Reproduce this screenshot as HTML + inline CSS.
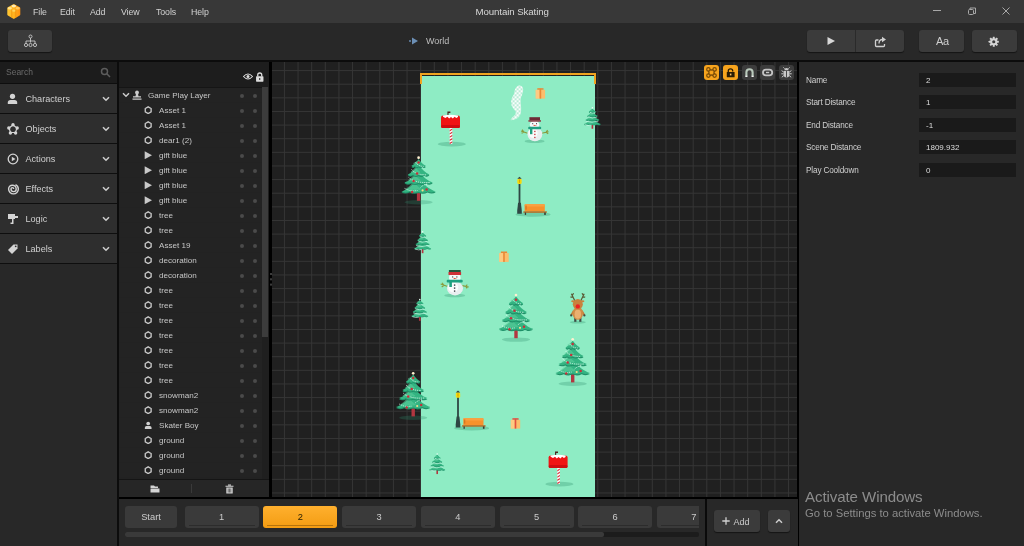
<!DOCTYPE html>
<html><head><meta charset="utf-8"><title>Mountain Skating</title>
<style>
*{box-sizing:border-box;margin:0;padding:0}
html,body{width:1024px;height:546px;overflow:hidden;background:#000;font-family:"Liberation Sans",sans-serif;color:#ccc;font-size:9px}
.abs,body>div,body>svg{position:absolute}
body>div{will-change:transform}
#title{left:0;top:0;width:1024px;height:22.500px;background:#383838}
#title span{position:absolute;top:7px;font-size:8.800px;color:#d2d2d2;letter-spacing:-0.1px}
#tool{left:0;top:23px;width:1024px;height:37px;background:#282828}
.btn{position:absolute;background:#3b3b3b;border-radius:3px;box-shadow:0 1px 1px rgba(0,0,0,.5)}
#left{left:0;top:61px;width:117px;height:485px;background:#0e0e0e}
#search{position:absolute;left:0;top:0;width:117px;height:22px;background:#1c1c1c}
#search span{position:absolute;left:6px;top:6px;font-size:8.5px;color:#6a6a6a}
.cat{position:absolute;left:0;width:117px;height:29px;background:#2e2e2e}
.cat span{position:absolute;left:25.500px;top:9.600px;font-size:9.100px;color:#d0d0d0}
.cat .chev{position:absolute;left:102px;top:12px}
.cat .ci{position:absolute;left:7.300px;top:8.800px}
#layers{left:119px;top:61px;width:150px;height:436px;background:#222;overflow:hidden}
#lhead{position:absolute;left:0;top:0;width:150px;height:25.500px;background:#1d1d1d}
.lr{position:absolute;left:0;width:143px;height:14px;background:#232323;margin-left:0}
.lr span{position:absolute;top:3px;font-size:8.100px;color:#c6c6c6;white-space:nowrap}
.lr .ic{position:absolute;left:25px;top:2.900px;width:8.400px;height:8.400px}
.lr i{position:absolute;top:6.300px;width:4px;height:4px;border-radius:2px;background:#4a4a4a}
.lr .d1{left:121px}.lr .d2{left:134px}
#canvas{left:272px;top:62px;width:525px;height:435px;background-color:#202020;
 background-image:linear-gradient(#353535 1px,transparent 1px),linear-gradient(90deg,#353535 1px,transparent 1px);
 background-size:13.64px 13.64px;background-position:-1.700px 8.100px;overflow:hidden}
#right{left:799px;top:62px;width:225px;height:484px;background:#282828}
.pl{position:absolute;left:7px;font-size:8.200px;letter-spacing:-0.150px;color:#cfcfcf}
.pf{position:absolute;left:120px;width:97px;height:14px;background:#1a1a1a;font-size:8px;color:#ddd;padding:3px 0 0 7px}
#bottom{left:119px;top:499px;width:588px;height:47px;background:#282828}
#bottom2{left:707px;top:499px;width:91px;height:47px;background:#282828}
.tb{position:absolute;top:2.800px;width:15px;height:15px;border-radius:3px;background:#3c3c3c}
.tab{position:absolute;top:7px;height:22px;background:#3a3a3a;border-radius:3px;font-size:9.300px;color:#ccc;text-align:center;padding-top:6px}
.tab.n{width:74px}
#sel:after{background:#b5730c !important}
.tab.n:after{content:"";position:absolute;left:4px;right:4px;bottom:2px;height:1px;background:#2c2c2c}
</style></head><body>
<div style="left:0;top:22px;width:1024px;height:3px;background:#282828"></div>
<div id="title">
<svg style="position:absolute;left:0;top:0" width="28" height="23" viewBox="0 0 28 23">
<defs><linearGradient id="lg" x1="0" x2="1" y1="0" y2="0"><stop offset="0" stop-color="#ffc834"/><stop offset="0.5" stop-color="#ffb21e"/><stop offset="1" stop-color="#ff8f10"/></linearGradient></defs>
<path d="M13.800 4 L19.800 7.200 Q20.300 7.500 20.300 8.200 V14.600 Q20.300 15.300 19.700 15.600 L13.800 19 L7.900 15.600 Q7.300 15.300 7.300 14.600 V8.200 Q7.300 7.500 7.800 7.200 Z" fill="url(#lg)"/>
<ellipse cx="9.800" cy="8.300" rx="2.100" ry="1.200" fill="#ffe28e"/><ellipse cx="13.800" cy="6.100" rx="2.300" ry="1.300" fill="#ffe9ae"/><ellipse cx="17.700" cy="8.300" rx="2.100" ry="1.200" fill="#ffc860"/><ellipse cx="13.800" cy="10.600" rx="2.100" ry="1.200" fill="#ffd45c"/>
<path d="M11.800 9.500 V17.600 M15.800 9.500 V17.600" stroke="#ee8c0c" stroke-width="0.700" fill="none"/>
</svg>
<span style="left:33px">File</span><span style="left:60px">Edit</span><span style="left:90px">Add</span><span style="left:121px">View</span><span style="left:156px">Tools</span><span style="left:191px">Help</span>
<span style="left:475.500px;top:6px;font-size:9.700px;color:#d8d8d8">Mountain Skating</span>
<svg style="position:absolute;left:930px;top:5px" width="90" height="14" viewBox="0 0 90 14" fill="none" stroke="#a8a8a8" stroke-width="1">
<path d="M3 5.5 H11"/><rect x="38.5" y="4.5" width="5" height="5" rx="1"/><path d="M40 4.5 V3 H45.500 V8.5 H43.5"/>
<path d="M72.500 2.500 L79.500 9.500 M79.500 2.500 L72.500 9.500"/></svg>
</div>
<div id="tool">
<div class="btn" style="left:8px;top:7px;width:44px;height:22px"><svg style="position:absolute;left:15px;top:4px" width="15" height="14" viewBox="0 0 15 14" fill="none" stroke="#c8c8c8" stroke-width="0.9"><circle cx="7.500" cy="2.500" r="1.500"/><path d="M7.500 4 V8.500 M3 9.500 V7 H12 V9.500"/><circle cx="3" cy="11" r="1.600"/><circle cx="7.500" cy="11" r="1.600"/><circle cx="12" cy="11" r="1.600"/></svg></div>
<svg style="position:absolute;left:408.200px;top:13px" width="12" height="10" viewBox="0 0 12 10"><polygon points="4,1.500 10,5 4,8.500" fill="#6c8fb5"/><rect x="1" y="4.300" width="2" height="1.400" fill="#6c8fb5"/></svg>
<span style="position:absolute;left:426px;top:13px;font-size:9px;color:#bdbdbd">World</span>
<div class="btn" style="left:807px;top:7px;width:97px;height:22px"><i style="position:absolute;left:48px;top:0;width:1px;height:22px;background:#2a2a2a"></i>
<svg style="position:absolute;left:18.800px;top:6.300px" width="10" height="10" viewBox="0 0 10 10"><polygon points="1.500,1 9,5 1.500,9" fill="#d8d8d8"/></svg>
<svg style="position:absolute;left:67px;top:5.500px" width="13" height="12" viewBox="0 0 13 12" fill="none" stroke="#d0d0d0" stroke-width="1.300"><path d="M4.500 4 H2.500 Q1.500 4 1.500 5 V9.500 Q1.500 10.500 2.500 10.500 H9.500 Q10.500 10.500 10.500 9.500 V8"/><path d="M5 7.500 Q5 3.500 8.500 3.500" /><polygon points="8,0.800 12,3.500 8,6.200" fill="#d0d0d0" stroke="none"/></svg></div>
<div class="btn" style="left:919px;top:7px;width:44.500px;height:22px"><span style="position:absolute;left:17px;top:5px;font-size:11px;color:#cfcfcf;letter-spacing:-0.400px">Aa</span></div>
<div class="btn" style="left:971.700px;top:7px;width:45px;height:22px"><svg style="position:absolute;left:16.700px;top:5.500px" width="11.500" height="11.500" viewBox="0 0 14 14"><g fill="#d4d4d4"><circle cx="7" cy="7" r="4.300"/><g id="t"><rect x="5.800" y="0.800" width="2.400" height="12.400" rx="0.500"/></g><rect x="5.800" y="0.800" width="2.400" height="12.400" rx="0.500" transform="rotate(45 7 7)"/><rect x="5.800" y="0.800" width="2.400" height="12.400" rx="0.500" transform="rotate(90 7 7)"/><rect x="5.800" y="0.800" width="2.400" height="12.400" rx="0.500" transform="rotate(135 7 7)"/></g><circle cx="7" cy="7" r="1.900" fill="#3b3b3b"/></svg></div>
</div>
<div id="left">
<div id="search"><span>Search</span><svg style="position:absolute;left:100px;top:6px" width="11" height="11" viewBox="0 0 11 11" fill="none" stroke="#5c5c5c" stroke-width="1.500"><circle cx="4.500" cy="4.500" r="3"/><path d="M6.800 6.800 L10 10"/></svg></div>
<div class="cat" style="top:23px"><svg class="ci" width="11" height="12" viewBox="0 0 11 12"><circle cx="5.500" cy="3.300" r="2.600" fill="#d4d4d4"/><path d="M0.800 11 V9.500 Q0.800 7 3.500 7 H7.500 Q10.200 7 10.200 9.500 V11 Z" fill="#d4d4d4"/></svg><span>Characters</span><svg class="chev" width="8" height="6" viewBox="0 0 8 6"><path d="M1 1.200 L4 4.200 L7 1.200" fill="none" stroke="#ccc" stroke-width="1.600"/></svg></div>
<div class="cat" style="top:53px"><svg class="ci" width="12" height="12" viewBox="0 0 12 12" fill="none" stroke="#d4d4d4"><polygon points="6,2 10,5 8.500,9.500 3.500,9.500 2,5" stroke-width="1.200"/><g fill="#d4d4d4" stroke="none"><circle cx="6" cy="1.800" r="1.700"/><circle cx="10.200" cy="5" r="1.700"/><circle cx="8.600" cy="10" r="1.700"/><circle cx="3.400" cy="10" r="1.700"/><circle cx="1.800" cy="5" r="1.700"/></g></svg><span>Objects</span><svg class="chev" width="8" height="6" viewBox="0 0 8 6"><path d="M1 1.200 L4 4.200 L7 1.200" fill="none" stroke="#ccc" stroke-width="1.600"/></svg></div>
<div class="cat" style="top:83px"><svg class="ci" width="12" height="12" viewBox="0 0 12 12"><circle cx="6" cy="6" r="4.800" fill="none" stroke="#d4d4d4" stroke-width="1.300"/><polygon points="4.800,3.800 8.500,6 4.800,8.200" fill="#d4d4d4"/></svg><span>Actions</span><svg class="chev" width="8" height="6" viewBox="0 0 8 6"><path d="M1 1.200 L4 4.200 L7 1.200" fill="none" stroke="#ccc" stroke-width="1.600"/></svg></div>
<div class="cat" style="top:113px"><svg class="ci" style="left:6.300px;top:8px" width="13.600" height="13.600" viewBox="0 0 12 12" fill="none" stroke="#d4d4d4" stroke-width="1.250"><path d="M6.800 6.200 A1.200 1.200 0 0 0 4.400 6.200 A2.300 2.300 0 0 0 9 6.200 A3.350 3.350 0 0 0 2.300 6.200 A4.300 4.300 0 0 0 10.900 6.200 A4.400 4.400 0 0 0 8.400 2.300"/></svg><span>Effects</span><svg class="chev" width="8" height="6" viewBox="0 0 8 6"><path d="M1 1.200 L4 4.200 L7 1.200" fill="none" stroke="#ccc" stroke-width="1.600"/></svg></div>
<div class="cat" style="top:143px"><svg class="ci" width="12" height="12" viewBox="0 0 12 12"><path d="M1 1 H8 V3 H11 V5 H8 V6 H6.500 V11 H3.500 V9.500 H5 V6 H1 Z" fill="#d4d4d4"/></svg><span>Logic</span><svg class="chev" width="8" height="6" viewBox="0 0 8 6"><path d="M1 1.200 L4 4.200 L7 1.200" fill="none" stroke="#ccc" stroke-width="1.600"/></svg></div>
<div class="cat" style="top:173px"><svg class="ci" width="12" height="12" viewBox="0 0 12 12"><path d="M6.500 1.500 H10.500 V5.500 L5 11 L1 7 Z" fill="#d4d4d4"/><circle cx="8.700" cy="3.300" r="0.900" fill="#2e2e2e"/></svg><span>Labels</span><svg class="chev" width="8" height="6" viewBox="0 0 8 6"><path d="M1 1.200 L4 4.200 L7 1.200" fill="none" stroke="#ccc" stroke-width="1.600"/></svg></div>

<div style="position:absolute;left:0;top:203px;width:117px;height:282px;background:#282828"></div>
</div>
<div id="layers">
<div id="lhead">
<svg style="position:absolute;left:124px;top:12px" width="10" height="7" viewBox="0 0 10 7"><path d="M0.500 3.500 Q5 -1.500 9.500 3.500 Q5 8.500 0.500 3.500 Z" fill="none" stroke="#ddd" stroke-width="1.100"/><circle cx="5" cy="3.500" r="1.500" fill="#ddd"/></svg>
<svg style="position:absolute;left:136.400px;top:11.200px" width="9.500" height="10" viewBox="0 0 9 10"><path d="M2.500 4.500 V3 Q2.500 1 4.500 1 Q6.500 1 6.500 3 V4.500" fill="none" stroke="#ddd" stroke-width="1.300"/><rect x="0.800" y="4.300" width="7.400" height="5.400" rx="0.600" fill="#ddd"/><rect x="4" y="6" width="1" height="2" fill="#222"/></svg>
</div>
<div style="position:absolute;left:0;top:25.500px;width:150px;height:1px;background:#151515"></div>
<div style="position:absolute;left:0;top:-61px;width:150px;height:600px">
<div class="lr" style="top:87.7px"><svg style="position:absolute;left:2.500px;top:4.800px" width="8" height="6" viewBox="0 0 8 6"><path d="M1 1.2 L4 4.2 L7 1.2" fill="none" stroke="#ccc" stroke-width="1.5"/></svg><svg style="position:absolute;left:13.300px;top:2px" width="10" height="10" viewBox="0 0 10 10"><circle cx="5" cy="2.4" r="1.9" fill="#ccc"/><path d="M4 3.5 H6 L6.5 6.5 H3.5 Z M1 6.3 H9 V7.6 H1 Z M0.5 8.6 H9.5 V9.8 H0.5 Z" fill="#ccc"/></svg><span style="left:29px">Game Play Layer</span><i class="d1"></i><i class="d2"></i></div>
<div class="lr" style="top:102.7px"><svg class="ic" viewBox="0 0 10 10"><polygon points="5,1 8.5,3 8.5,7 5,9 1.5,7 1.5,3" fill="none" stroke="#c8c8c8" stroke-width="1.6"/></svg><span style="left:40px">Asset 1</span><i class="d1"></i><i class="d2"></i></div>
<div class="lr" style="top:117.7px"><svg class="ic" viewBox="0 0 10 10"><polygon points="5,1 8.5,3 8.5,7 5,9 1.5,7 1.5,3" fill="none" stroke="#c8c8c8" stroke-width="1.6"/></svg><span style="left:40px">Asset 1</span><i class="d1"></i><i class="d2"></i></div>
<div class="lr" style="top:132.7px"><svg class="ic" viewBox="0 0 10 10"><polygon points="5,1 8.5,3 8.5,7 5,9 1.5,7 1.5,3" fill="none" stroke="#c8c8c8" stroke-width="1.6"/></svg><span style="left:40px">dear1 (2)</span><i class="d1"></i><i class="d2"></i></div>
<div class="lr" style="top:147.7px"><svg class="ic" viewBox="0 0 10 10"><polygon points="0.800,0.200 9.600,5 0.800,9.800" fill="#c8c8c8"/></svg><span style="left:40px">gift blue</span><i class="d1"></i><i class="d2"></i></div>
<div class="lr" style="top:162.7px"><svg class="ic" viewBox="0 0 10 10"><polygon points="0.800,0.200 9.600,5 0.800,9.800" fill="#c8c8c8"/></svg><span style="left:40px">gift blue</span><i class="d1"></i><i class="d2"></i></div>
<div class="lr" style="top:177.7px"><svg class="ic" viewBox="0 0 10 10"><polygon points="0.800,0.200 9.600,5 0.800,9.800" fill="#c8c8c8"/></svg><span style="left:40px">gift blue</span><i class="d1"></i><i class="d2"></i></div>
<div class="lr" style="top:192.7px"><svg class="ic" viewBox="0 0 10 10"><polygon points="0.800,0.200 9.600,5 0.800,9.800" fill="#c8c8c8"/></svg><span style="left:40px">gift blue</span><i class="d1"></i><i class="d2"></i></div>
<div class="lr" style="top:207.7px"><svg class="ic" viewBox="0 0 10 10"><polygon points="5,1 8.5,3 8.5,7 5,9 1.5,7 1.5,3" fill="none" stroke="#c8c8c8" stroke-width="1.6"/></svg><span style="left:40px">tree</span><i class="d1"></i><i class="d2"></i></div>
<div class="lr" style="top:222.7px"><svg class="ic" viewBox="0 0 10 10"><polygon points="5,1 8.5,3 8.5,7 5,9 1.5,7 1.5,3" fill="none" stroke="#c8c8c8" stroke-width="1.6"/></svg><span style="left:40px">tree</span><i class="d1"></i><i class="d2"></i></div>
<div class="lr" style="top:237.7px"><svg class="ic" viewBox="0 0 10 10"><polygon points="5,1 8.5,3 8.5,7 5,9 1.5,7 1.5,3" fill="none" stroke="#c8c8c8" stroke-width="1.6"/></svg><span style="left:40px">Asset 19</span><i class="d1"></i><i class="d2"></i></div>
<div class="lr" style="top:252.7px"><svg class="ic" viewBox="0 0 10 10"><polygon points="5,1 8.5,3 8.5,7 5,9 1.5,7 1.5,3" fill="none" stroke="#c8c8c8" stroke-width="1.6"/></svg><span style="left:40px">decoration</span><i class="d1"></i><i class="d2"></i></div>
<div class="lr" style="top:267.7px"><svg class="ic" viewBox="0 0 10 10"><polygon points="5,1 8.5,3 8.5,7 5,9 1.5,7 1.5,3" fill="none" stroke="#c8c8c8" stroke-width="1.6"/></svg><span style="left:40px">decoration</span><i class="d1"></i><i class="d2"></i></div>
<div class="lr" style="top:282.7px"><svg class="ic" viewBox="0 0 10 10"><polygon points="5,1 8.5,3 8.5,7 5,9 1.5,7 1.5,3" fill="none" stroke="#c8c8c8" stroke-width="1.6"/></svg><span style="left:40px">tree</span><i class="d1"></i><i class="d2"></i></div>
<div class="lr" style="top:297.7px"><svg class="ic" viewBox="0 0 10 10"><polygon points="5,1 8.5,3 8.5,7 5,9 1.5,7 1.5,3" fill="none" stroke="#c8c8c8" stroke-width="1.6"/></svg><span style="left:40px">tree</span><i class="d1"></i><i class="d2"></i></div>
<div class="lr" style="top:312.7px"><svg class="ic" viewBox="0 0 10 10"><polygon points="5,1 8.5,3 8.5,7 5,9 1.5,7 1.5,3" fill="none" stroke="#c8c8c8" stroke-width="1.6"/></svg><span style="left:40px">tree</span><i class="d1"></i><i class="d2"></i></div>
<div class="lr" style="top:327.7px"><svg class="ic" viewBox="0 0 10 10"><polygon points="5,1 8.5,3 8.5,7 5,9 1.5,7 1.5,3" fill="none" stroke="#c8c8c8" stroke-width="1.6"/></svg><span style="left:40px">tree</span><i class="d1"></i><i class="d2"></i></div>
<div class="lr" style="top:342.7px"><svg class="ic" viewBox="0 0 10 10"><polygon points="5,1 8.5,3 8.5,7 5,9 1.5,7 1.5,3" fill="none" stroke="#c8c8c8" stroke-width="1.6"/></svg><span style="left:40px">tree</span><i class="d1"></i><i class="d2"></i></div>
<div class="lr" style="top:357.7px"><svg class="ic" viewBox="0 0 10 10"><polygon points="5,1 8.5,3 8.5,7 5,9 1.5,7 1.5,3" fill="none" stroke="#c8c8c8" stroke-width="1.6"/></svg><span style="left:40px">tree</span><i class="d1"></i><i class="d2"></i></div>
<div class="lr" style="top:372.7px"><svg class="ic" viewBox="0 0 10 10"><polygon points="5,1 8.5,3 8.5,7 5,9 1.5,7 1.5,3" fill="none" stroke="#c8c8c8" stroke-width="1.6"/></svg><span style="left:40px">tree</span><i class="d1"></i><i class="d2"></i></div>
<div class="lr" style="top:387.7px"><svg class="ic" viewBox="0 0 10 10"><polygon points="5,1 8.5,3 8.5,7 5,9 1.5,7 1.5,3" fill="none" stroke="#c8c8c8" stroke-width="1.6"/></svg><span style="left:40px">snowman2</span><i class="d1"></i><i class="d2"></i></div>
<div class="lr" style="top:402.7px"><svg class="ic" viewBox="0 0 10 10"><polygon points="5,1 8.5,3 8.5,7 5,9 1.5,7 1.5,3" fill="none" stroke="#c8c8c8" stroke-width="1.6"/></svg><span style="left:40px">snowman2</span><i class="d1"></i><i class="d2"></i></div>
<div class="lr" style="top:417.7px"><svg class="ic" viewBox="0 0 10 10"><circle cx="5" cy="3" r="2.2" fill="#d0d0d0"/><path d="M1 9.5 V8 Q1 6 3 6 H7 Q9 6 9 8 V9.5 Z" fill="#d0d0d0"/></svg><span style="left:40px">Skater Boy</span><i class="d1"></i><i class="d2"></i></div>
<div class="lr" style="top:432.7px"><svg class="ic" viewBox="0 0 10 10"><polygon points="5,1 8.5,3 8.5,7 5,9 1.5,7 1.5,3" fill="none" stroke="#c8c8c8" stroke-width="1.6"/></svg><span style="left:40px">ground</span><i class="d1"></i><i class="d2"></i></div>
<div class="lr" style="top:447.7px"><svg class="ic" viewBox="0 0 10 10"><polygon points="5,1 8.5,3 8.5,7 5,9 1.5,7 1.5,3" fill="none" stroke="#c8c8c8" stroke-width="1.6"/></svg><span style="left:40px">ground</span><i class="d1"></i><i class="d2"></i></div>
<div class="lr" style="top:462.7px"><svg class="ic" viewBox="0 0 10 10"><polygon points="5,1 8.5,3 8.5,7 5,9 1.5,7 1.5,3" fill="none" stroke="#c8c8c8" stroke-width="1.6"/></svg><span style="left:40px">ground</span><i class="d1"></i><i class="d2"></i></div>
</div>
<div style="position:absolute;left:143px;top:26px;width:7px;height:392px;background:#1f1f1f"></div>
<div style="position:absolute;left:143px;top:26px;width:6px;height:249.500px;background:#3c3c3c"></div>
<div style="position:absolute;left:0;top:418px;width:150px;height:18px;background:#262626;border-top:1px solid #151515">
<svg style="position:absolute;left:31px;top:5px" width="10" height="8" viewBox="0 0 10 8"><path d="M0.500 0.500 H4 L5 1.500 H8 V3 H0.500 Z M0.500 3.600 H9.500 V7.500 H0.500 Z" fill="#d4d4d4"/></svg>
<i style="position:absolute;left:72px;top:4px;width:1px;height:9px;background:#3a3a3a"></i>
<svg style="position:absolute;left:106px;top:4px" width="9" height="10" viewBox="0 0 9 10"><path d="M0.500 1.800 H8.500 V2.800 H0.500 Z M3 0.500 H6 V1.500 H3 Z M1.300 3.500 H7.700 V9.500 H1.300 Z" fill="#d4d4d4"/><path d="M3.200 4.500 V8.500 M4.500 4.500 V8.500 M5.800 4.500 V8.500" stroke="#262626" stroke-width="0.600"/></svg>
</div>
</div>
<div style="left:269.600px;top:272.500px;width:1.600px;height:1.600px;background:#3c3c3c;box-shadow:0 5.300px 0 #3c3c3c,0 10.600px 0 #3c3c3c"></div>
<div id="canvas">
<div style="position:absolute;left:149px;top:13.5px;width:173.500px;height:421.500px;background:#8eecc4"></div>
<div style="position:absolute;left:148px;top:11px;width:175.500px;height:11px;border:2px solid #f0a420;border-bottom:none"></div>
<svg style="position:absolute;left:-272px;top:-62px" width="1024" height="546" viewBox="0 0 1024 546"><defs><pattern id="ck" x="0.6" y="0.3" width="4" height="4" patternUnits="userSpaceOnUse"><rect width="4" height="4" fill="#ffffff"/><rect width="2" height="2" fill="#bdebd8"/><rect x="2" y="2" width="2" height="2" fill="#bdebd8"/></pattern></defs>
<path d="M518.500,85.600 C522.500,85 524,88.500 522.800,92.500 C522,95.500 520.600,97.500 520.600,100.500 C520.600,104.500 521.600,108 521,112 C520.400,116.500 518,119.300 510.800,120.200 C510.600,118 514,116.500 515.500,114 C517,111 513.200,110 511.600,105.500 C510.400,101 511.600,97.500 513.600,95 C515,93 513.800,88 518.500,85.600 Z" fill="url(#ck)" opacity="0.95"/>
<g><rect x="535.7" y="89.8" width="9.4" height="8.8" fill="#fbbd6c"/><rect x="535.7" y="89.8" width="3.6" height="8.8" fill="#fdd08c" opacity="0.7"/><rect x="539.6" y="88.8" width="1.600" height="9.800" fill="#ea8836"/><rect x="537.3" y="88.2" width="6.200" height="1.500" fill="#ea8836"/></g>
<g><ellipse cx="451.8" cy="144.1" rx="14" ry="2.4" fill="#2a8a68" opacity="0.3"/><rect x="449.7" y="127.4" width="2.6" height="16.5" fill="#fff"/><path d="M449.7 130 L452.3 128.4 V129.8 L449.7 131.4 Z" fill="#d8323c"/><path d="M449.7 133.2 L452.3 131.6 V133 L449.7 134.6 Z" fill="#d8323c"/><path d="M449.7 136.4 L452.3 134.8 V136.2 L449.7 137.8 Z" fill="#d8323c"/><path d="M449.7 139.6 L452.3 138 V139.4 L449.7 141 Z" fill="#d8323c"/><path d="M449.7 142.8 L452.3 141.2 V142.6 L449.7 144.2 Z" fill="#d8323c"/><path d="M447.4 116.4 V111.6 H450.4 V113 H448.6 V116.4 Z" fill="#4a2a22"/><rect x="441" y="115.4" width="19" height="12.6" rx="2.2" fill="#f01414"/><rect x="441" y="125" width="19" height="3" rx="1.5" fill="#d00c10"/><path d="M443 115.6 Q450.5 113.8 458 115.6 L458 117 L456.3 118 L454.6 116.8 L452.8 118.4 L451 116.9 L449.2 118.4 L447.4 116.8 L445.4 118 L443 116.8 Z" fill="#fff"/></g>
<g><ellipse cx="534.6" cy="141.2" rx="10" ry="1.8" fill="#2a8a68" opacity="0.3"/><path d="M527.6 133.2 L521.1 131 M523.6 131.8 L522.2 129.6 M524 132 L521.6 133.2 M541.6 133.2 L548.6 131.8 M546 132.3 L547.6 130.2 M546 132.3 L548.2 133.8" stroke="#8a9a3c" stroke-width="1.1" fill="none"/><ellipse cx="534.9" cy="134.2" rx="7.4" ry="7" fill="#e9eef0"/><ellipse cx="533.1" cy="133.2" rx="4.5" ry="4.8" fill="#fafcfc"/><ellipse cx="534.6" cy="124.8" rx="4.8" ry="4" fill="#f6f9fa"/><rect x="528.2" y="126.8" width="13" height="2.4" rx="1" fill="#1fa080"/><rect x="530" y="127.2" width="2.4" height="7" fill="#1fa080"/><rect x="529.4" y="117.2" width="10.6" height="3.2" fill="#6e2b36"/><rect x="528.4" y="120.2" width="12.6" height="1.5" fill="#8c3844"/><rect x="532.2" y="123.2" width="1" height="1" fill="#333"/><rect x="536" y="123.2" width="1" height="1" fill="#333"/><path d="M533.6 124.8 L537.2 125.6 L533.6 126 Z" fill="#e0523a"/><rect x="534.2" y="130.8" width="1.3" height="1.3" fill="#c8303a"/><rect x="534.2" y="133.8" width="1.3" height="1.3" fill="#c8303a"/><rect x="534.2" y="136.8" width="1.3" height="1.3" fill="#c8303a"/></g>
<g><rect x="591.57" y="123.66" width="1.67" height="5.1" fill="#b23640"/><path d="M592.4,118.32 C589.87,121.3 586.84,123.86 583.97,124.64 Q585.83,125.72 588.02,124.74 Q590.04,125.82 592.4,124.93 Q594.76,125.82 596.78,124.74 Q598.97,125.72 600.83,124.64 C597.96,123.86 594.93,121.3 592.4,118.32 Z" fill="#1f9068"/><path d="M592.4,117.78 C589.87,120.76 586.84,123.32 583.97,124.1 Q585.83,125.18 588.02,124.2 Q590.04,125.28 592.4,124.39 Q594.76,125.28 596.78,124.2 Q598.97,125.18 600.83,124.1 C597.96,123.32 594.93,120.76 592.4,117.78 Z" fill="#34b482"/><path d="M589.87,118.76 C588.73,120.82 587.37,122.09 586.08,122.88 Q586.91,123.95 587.9,122.97 Q588.81,124.05 589.87,123.17 Q590.93,124.05 591.84,122.97 Q592.83,123.95 593.66,122.88 C592.37,122.09 591.01,120.82 589.87,118.76 Z" fill="#5fcf9f" opacity="0.55"/><path d="M592.4,114.89 C590.31,117.5 587.81,119.54 585.44,120.33 Q586.97,121.41 588.78,120.43 Q590.45,121.5 592.4,120.62 Q594.35,121.5 596.02,120.43 Q597.83,121.41 599.36,120.33 C596.99,119.54 594.49,117.5 592.4,114.89 Z" fill="#1f9068"/><path d="M592.4,114.35 C590.31,116.96 587.81,119 585.44,119.79 Q586.97,120.87 588.78,119.89 Q590.45,120.97 592.4,120.08 Q594.35,120.97 596.02,119.89 Q597.83,120.87 599.36,119.79 C596.99,119 594.49,116.96 592.4,114.35 Z" fill="#34b482"/><path d="M590.31,115.33 C589.37,117.02 588.25,117.78 587.18,118.56 Q587.87,119.64 588.68,118.66 Q589.44,119.74 590.31,118.86 Q591.19,119.74 591.94,118.66 Q592.75,119.64 593.44,118.56 C592.38,117.78 591.25,117.02 590.31,115.33 Z" fill="#5fcf9f" opacity="0.55"/><path d="M592.4,111.46 C590.81,113.87 588.91,115.62 587.11,116.41 Q588.27,117.49 589.65,116.51 Q590.92,117.58 592.4,116.7 Q593.88,117.58 595.15,116.51 Q596.53,117.49 597.69,116.41 C595.89,115.62 593.99,113.87 592.4,111.46 Z" fill="#1f9068"/><path d="M592.4,110.92 C590.81,113.33 588.91,115.08 587.11,115.87 Q588.27,116.95 589.65,115.97 Q590.92,117.05 592.4,116.16 Q593.88,117.05 595.15,115.97 Q596.53,116.95 597.69,115.87 C595.89,115.08 593.99,113.33 592.4,110.92 Z" fill="#34b482"/><path d="M590.81,111.9 C590.1,113.38 589.24,113.86 588.43,114.64 Q588.95,115.72 589.57,114.74 Q590.15,115.82 590.81,114.94 Q591.48,115.82 592.05,114.74 Q592.67,115.72 593.19,114.64 C592.38,113.86 591.53,113.38 590.81,111.9 Z" fill="#5fcf9f" opacity="0.55"/><path d="M592.4,108.76 C591.34,110.51 590.07,111.36 588.87,112.14 Q589.65,113.22 590.57,112.24 Q591.41,113.32 592.4,112.44 Q593.39,113.32 594.23,112.24 Q595.15,113.22 595.93,112.14 C594.73,111.36 593.46,110.51 592.4,108.76 Z" fill="#1f9068"/><path d="M592.4,108.22 C591.34,109.97 590.07,110.82 588.87,111.61 Q589.65,112.68 590.57,111.7 Q591.41,112.78 592.4,111.9 Q593.39,112.78 594.23,111.7 Q595.15,112.68 595.93,111.61 C594.73,110.82 593.46,109.97 592.4,108.22 Z" fill="#34b482"/><path d="M591.34,109.2 C590.87,110.03 590.29,109.6 589.75,110.38 Q590.1,111.46 590.52,110.48 Q590.9,111.56 591.34,110.67 Q591.79,111.56 592.17,110.48 Q592.58,111.46 592.93,110.38 C592.39,109.6 591.82,110.03 591.34,109.2 Z" fill="#5fcf9f" opacity="0.55"/><path d="M589.95,112.39 Q592.4,113.86 595.34,112.88 M587.99,116.8 Q591.91,118.76 596.81,117.29 M586.03,121.21 Q591.42,123.17 598.28,121.21 M585.05,124.64 Q588.48,126.11 591.42,125.13" fill="none" stroke="#d8fff0" stroke-width="0.78" opacity="0.8"/><circle cx="592.4" cy="107.88" r="0.78" fill="#e8fff4"/></g>
<g><ellipse cx="418.6" cy="202.2" rx="14" ry="2.2" fill="#2a8a68" opacity="0.28"/><rect x="416.9" y="190.4" width="3.4" height="10.4" fill="#b23640"/><path d="M418.6,179.5 C413.44,185.59 407.25,190.8 401.4,192.4 Q405.18,194.6 409.66,192.6 Q413.78,194.8 418.6,193 Q423.42,194.8 427.54,192.6 Q432.02,194.6 435.8,192.4 C429.95,190.8 423.76,185.59 418.6,179.5 Z" fill="#1f9068"/><path d="M418.6,178.4 C413.44,184.49 407.25,189.7 401.4,191.3 Q405.18,193.5 409.66,191.5 Q413.78,193.7 418.6,191.9 Q423.42,193.7 427.54,191.5 Q432.02,193.5 435.8,191.3 C429.95,189.7 423.76,184.49 418.6,178.4 Z" fill="#34b482"/><path d="M413.44,180.4 C411.12,184.6 408.33,187.2 405.7,188.8 Q407.4,191 409.42,189 Q411.27,191.2 413.44,189.4 Q415.61,191.2 417.46,189 Q419.48,191 421.18,188.8 C418.55,187.2 415.76,184.6 413.44,180.4 Z" fill="#5fcf9f" opacity="0.55"/><path d="M418.6,172.5 C414.34,177.83 409.23,182 404.4,183.6 Q407.52,185.8 411.22,183.8 Q414.62,186 418.6,184.2 Q422.58,186 425.98,183.8 Q429.68,185.8 432.8,183.6 C427.97,182 422.86,177.83 418.6,172.5 Z" fill="#1f9068"/><path d="M418.6,171.4 C414.34,176.73 409.23,180.9 404.4,182.5 Q407.52,184.7 411.22,182.7 Q414.62,184.9 418.6,183.1 Q422.58,184.9 425.98,182.7 Q429.68,184.7 432.8,182.5 C427.97,180.9 422.86,176.73 418.6,171.4 Z" fill="#34b482"/><path d="M414.34,173.4 C412.42,176.84 410.12,178.4 407.95,180 Q409.36,182.2 411.02,180.2 Q412.55,182.4 414.34,180.6 Q416.13,182.4 417.66,180.2 Q419.32,182.2 420.73,180 C418.56,178.4 416.26,176.84 414.34,173.4 Z" fill="#5fcf9f" opacity="0.55"/><path d="M418.6,165.5 C415.36,170.41 411.47,174 407.8,175.6 Q410.18,177.8 412.98,175.8 Q415.58,178 418.6,176.2 Q421.62,178 424.22,175.8 Q427.02,177.8 429.4,175.6 C425.73,174 421.84,170.41 418.6,165.5 Z" fill="#1f9068"/><path d="M418.6,164.4 C415.36,169.31 411.47,172.9 407.8,174.5 Q410.18,176.7 412.98,174.7 Q415.58,176.9 418.6,175.1 Q421.62,176.9 424.22,174.7 Q427.02,176.7 429.4,174.5 C425.73,172.9 421.84,169.31 418.6,164.4 Z" fill="#34b482"/><path d="M415.36,166.4 C413.9,169.42 412.15,170.4 410.5,172 Q411.57,174.2 412.83,172.2 Q414,174.4 415.36,172.6 Q416.72,174.4 417.89,172.2 Q419.15,174.2 420.22,172 C418.57,170.4 416.82,169.42 415.36,166.4 Z" fill="#5fcf9f" opacity="0.55"/><path d="M418.6,160 C416.44,163.57 413.85,165.3 411.4,166.9 Q412.98,169.1 414.86,167.1 Q416.58,169.3 418.6,167.5 Q420.62,169.3 422.34,167.1 Q424.22,169.1 425.8,166.9 C423.35,165.3 420.76,163.57 418.6,160 Z" fill="#1f9068"/><path d="M418.6,158.9 C416.44,162.47 413.85,164.2 411.4,165.8 Q412.98,168 414.86,166 Q416.58,168.2 418.6,166.4 Q420.62,168.2 422.34,166 Q424.22,168 425.8,165.8 C423.35,164.2 420.76,162.47 418.6,158.9 Z" fill="#34b482"/><path d="M416.44,160.9 C415.47,162.58 414.3,161.7 413.2,163.3 Q413.91,165.5 414.76,163.5 Q415.53,165.7 416.44,163.9 Q417.35,165.7 418.12,163.5 Q418.97,165.5 419.68,163.3 C418.58,161.7 417.41,162.58 416.44,160.9 Z" fill="#5fcf9f" opacity="0.55"/><path d="M415.6,162.4 Q418.6,166.4 423.6,166.4 M411.6,169.4 Q415.6,174.9 426.6,174.9 M408.6,177.4 Q414.6,183.4 429.6,182.4 M404.6,188.4 Q410.6,191.9 417.6,190.4 M420.6,187.4 Q423.6,184.4 427.6,183.9" fill="none" stroke="#e8fff4" stroke-width="0.9" stroke-dasharray="1.2 0.9" opacity="0.9"/><circle cx="418.6" cy="162.4" r="1.25" fill="#c8303a"/><circle cx="417.1" cy="173.4" r="1.25" fill="#c8303a"/><circle cx="413.6" cy="180.9" r="1.25" fill="#c8303a"/><circle cx="426.6" cy="189.4" r="1.25" fill="#c8303a"/><circle cx="412.1" cy="191.9" r="1.25" fill="#c8303a"/><circle cx="422.6" cy="190.4" r="1.1" fill="#f3e08a"/><circle cx="418.6" cy="157.7" r="1.35" fill="#fff0d0"/></g>
<g><ellipse cx="533.05" cy="214.4" rx="17.5" ry="2.3" fill="#2a8a68" opacity="0.3"/><rect x="518.6" y="182.8" width="1.8" height="22" fill="#2e4643"/><path d="M518.1 202.8 H520.9 L521.8 210.8 V213.8 H517.2 V210.8 Z" fill="#2e4643"/><rect x="517.3" y="178.4" width="4.4" height="5.6" rx="1.6" fill="#f6dc10"/><rect x="518.9" y="179.4" width="1.2" height="3.4" fill="#d8a800"/><path d="M517.3 178.8 L519.5 176.8 L521.7 178.8 Z" fill="#2e4643"/><rect x="524.6" y="204.3" width="20.2" height="7.2" rx="0.8" fill="#f7922c"/><rect x="524.6" y="204.3" width="20.2" height="2.2" rx="0.8" fill="#fba040"/><rect x="523.4" y="211.3" width="23.4" height="1.5" fill="#b86a22"/><rect x="524.8" y="212.5" width="1.3" height="2.4" fill="#3a3a2e"/><rect x="544.2" y="212.5" width="1.6" height="2.4" fill="#3a3a2e"/><rect x="525.6" y="205.5" width="0.9" height="4.2" fill="#c86a1c"/></g>
<g><rect x="421.75" y="248" width="1.7" height="5.2" fill="#b23640"/><path d="M422.6,242.55 C420.02,245.59 416.92,248.2 414,249 Q415.89,250.1 418.13,249.1 Q420.19,250.2 422.6,249.3 Q425.01,250.2 427.07,249.1 Q429.31,250.1 431.2,249 C428.28,248.2 425.18,245.59 422.6,242.55 Z" fill="#1f9068"/><path d="M422.6,242 C420.02,245.04 416.92,247.65 414,248.45 Q415.89,249.55 418.13,248.55 Q420.19,249.65 422.6,248.75 Q425.01,249.65 427.07,248.55 Q429.31,249.55 431.2,248.45 C428.28,247.65 425.18,245.04 422.6,242 Z" fill="#34b482"/><path d="M420.02,243 C418.86,245.1 417.47,246.4 416.15,247.2 Q417,248.3 418.01,247.3 Q418.94,248.4 420.02,247.5 Q421.1,248.4 422.03,247.3 Q423.04,248.3 423.89,247.2 C422.57,246.4 421.18,245.1 420.02,243 Z" fill="#5fcf9f" opacity="0.55"/><path d="M422.6,239.05 C420.47,241.72 417.91,243.8 415.5,244.6 Q417.06,245.7 418.91,244.7 Q420.61,245.8 422.6,244.9 Q424.59,245.8 426.29,244.7 Q428.14,245.7 429.7,244.6 C427.29,243.8 424.73,241.72 422.6,239.05 Z" fill="#1f9068"/><path d="M422.6,238.5 C420.47,241.17 417.91,243.25 415.5,244.05 Q417.06,245.15 418.91,244.15 Q420.61,245.25 422.6,244.35 Q424.59,245.25 426.29,244.15 Q428.14,245.15 429.7,244.05 C427.29,243.25 424.73,241.17 422.6,238.5 Z" fill="#34b482"/><path d="M420.47,239.5 C419.51,241.22 418.36,242 417.28,242.8 Q417.98,243.9 418.81,242.9 Q419.58,244 420.47,243.1 Q421.36,244 422.13,242.9 Q422.96,243.9 423.67,242.8 C422.58,242 421.43,241.22 420.47,239.5 Z" fill="#5fcf9f" opacity="0.55"/><path d="M422.6,235.55 C420.98,238.01 419.04,239.8 417.2,240.6 Q418.39,241.7 419.79,240.7 Q421.09,241.8 422.6,240.9 Q424.11,241.8 425.41,240.7 Q426.81,241.7 428,240.6 C426.16,239.8 424.22,238.01 422.6,235.55 Z" fill="#1f9068"/><path d="M422.6,235 C420.98,237.46 419.04,239.25 417.2,240.05 Q418.39,241.15 419.79,240.15 Q421.09,241.25 422.6,240.35 Q424.11,241.25 425.41,240.15 Q426.81,241.15 428,240.05 C426.16,239.25 424.22,237.46 422.6,235 Z" fill="#34b482"/><path d="M420.98,236 C420.25,237.51 419.38,238 418.55,238.8 Q419.08,239.9 419.72,238.9 Q420.3,240 420.98,239.1 Q421.66,240 422.24,238.9 Q422.88,239.9 423.41,238.8 C422.58,238 421.71,237.51 420.98,236 Z" fill="#5fcf9f" opacity="0.55"/><path d="M422.6,232.8 C421.52,234.59 420.22,235.45 419,236.25 Q419.79,237.35 420.73,236.35 Q421.59,237.45 422.6,236.55 Q423.61,237.45 424.47,236.35 Q425.41,237.35 426.2,236.25 C424.98,235.45 423.68,234.59 422.6,232.8 Z" fill="#1f9068"/><path d="M422.6,232.25 C421.52,234.03 420.22,234.9 419,235.7 Q419.79,236.8 420.73,235.8 Q421.59,236.9 422.6,236 Q423.61,236.9 424.47,235.8 Q425.41,236.8 426.2,235.7 C424.98,234.9 423.68,234.03 422.6,232.25 Z" fill="#34b482"/><path d="M421.52,233.25 C421.03,234.09 420.45,233.65 419.9,234.45 Q420.26,235.55 420.68,234.55 Q421.07,235.65 421.52,234.75 Q421.97,235.65 422.36,234.55 Q422.78,235.55 423.14,234.45 C422.59,233.65 422.01,234.09 421.52,233.25 Z" fill="#5fcf9f" opacity="0.55"/><path d="M420.1,236.5 Q422.6,238 425.6,237 M418.1,241 Q422.1,243 427.1,241.5 M416.1,245.5 Q421.6,247.5 428.6,245.5 M415.1,249 Q418.6,250.5 421.6,249.5" fill="none" stroke="#d8fff0" stroke-width="0.8" opacity="0.8"/><circle cx="422.6" cy="231.9" r="0.8" fill="#e8fff4"/></g>
<g><rect x="499.3" y="253.1" width="9.4" height="8.8" fill="#fbbd6c"/><rect x="499.3" y="253.1" width="3.6" height="8.8" fill="#fdd08c" opacity="0.7"/><rect x="503.2" y="252.1" width="1.600" height="9.800" fill="#ea8836"/><rect x="500.9" y="251.5" width="6.200" height="1.500" fill="#ea8836"/></g>
<g><ellipse cx="454.7" cy="295.4" rx="10.5" ry="1.8" fill="#2a8a68" opacity="0.3"/><path d="M447.7 286.6 L440.7 284 M443.7 285 L442.1 282.8 M444.1 285.3 L441.7 287 M462.3 285.6 L468.7 287 M465.7 286.3 L467.3 284.6 M465.7 286.3 L467.1 288.4" stroke="#8a9a3c" stroke-width="1.1" fill="none"/><ellipse cx="455" cy="288.4" rx="8" ry="7" fill="#e9eef0"/><ellipse cx="453.2" cy="287.4" rx="5" ry="5" fill="#fafcfc"/><rect x="449.1" y="274.6" width="11.4" height="6.6" rx="2.4" fill="#f6f9fa"/><rect x="446.7" y="279.8" width="16" height="2.6" rx="1" fill="#1fa080"/><rect x="449.3" y="280" width="2.6" height="7" fill="#1fa080"/><rect x="448.9" y="270" width="11.8" height="2.2" fill="#22543c"/><rect x="448.5" y="272" width="12.6" height="3" fill="#d03038"/><rect x="452.1" y="276.4" width="1.1" height="1.1" fill="#333"/><rect x="456.3" y="276.4" width="1.1" height="1.1" fill="#333"/><path d="M453.7 277.8 L457.1 278.6 L453.7 279.2 Z" fill="#e0523a"/><rect x="453.9" y="284.4" width="1.4" height="1.4" fill="#3a3a44"/><rect x="453.9" y="287.4" width="1.4" height="1.4" fill="#3a3a44"/><rect x="453.9" y="290.4" width="1.4" height="1.4" fill="#3a3a44"/></g>
<g><rect x="418.95" y="315.6" width="1.7" height="5.2" fill="#b23640"/><path d="M419.8,310.15 C417.22,313.2 414.12,315.8 411.2,316.6 Q413.09,317.7 415.33,316.7 Q417.39,317.8 419.8,316.9 Q422.21,317.8 424.27,316.7 Q426.51,317.7 428.4,316.6 C425.48,315.8 422.38,313.2 419.8,310.15 Z" fill="#1f9068"/><path d="M419.8,309.6 C417.22,312.65 414.12,315.25 411.2,316.05 Q413.09,317.15 415.33,316.15 Q417.39,317.25 419.8,316.35 Q422.21,317.25 424.27,316.15 Q426.51,317.15 428.4,316.05 C425.48,315.25 422.38,312.65 419.8,309.6 Z" fill="#34b482"/><path d="M417.22,310.6 C416.06,312.7 414.67,314 413.35,314.8 Q414.2,315.9 415.21,314.9 Q416.14,316 417.22,315.1 Q418.3,316 419.23,314.9 Q420.24,315.9 421.09,314.8 C419.77,314 418.38,312.7 417.22,310.6 Z" fill="#5fcf9f" opacity="0.55"/><path d="M419.8,306.65 C417.67,309.32 415.11,311.4 412.7,312.2 Q414.26,313.3 416.11,312.3 Q417.81,313.4 419.8,312.5 Q421.79,313.4 423.49,312.3 Q425.34,313.3 426.9,312.2 C424.49,311.4 421.93,309.32 419.8,306.65 Z" fill="#1f9068"/><path d="M419.8,306.1 C417.67,308.77 415.11,310.85 412.7,311.65 Q414.26,312.75 416.11,311.75 Q417.81,312.85 419.8,311.95 Q421.79,312.85 423.49,311.75 Q425.34,312.75 426.9,311.65 C424.49,310.85 421.93,308.77 419.8,306.1 Z" fill="#34b482"/><path d="M417.67,307.1 C416.71,308.82 415.56,309.6 414.48,310.4 Q415.18,311.5 416.01,310.5 Q416.78,311.6 417.67,310.7 Q418.56,311.6 419.33,310.5 Q420.16,311.5 420.87,310.4 C419.78,309.6 418.63,308.82 417.67,307.1 Z" fill="#5fcf9f" opacity="0.55"/><path d="M419.8,303.15 C418.18,305.61 416.24,307.4 414.4,308.2 Q415.59,309.3 416.99,308.3 Q418.29,309.4 419.8,308.5 Q421.31,309.4 422.61,308.3 Q424.01,309.3 425.2,308.2 C423.36,307.4 421.42,305.61 419.8,303.15 Z" fill="#1f9068"/><path d="M419.8,302.6 C418.18,305.06 416.24,306.85 414.4,307.65 Q415.59,308.75 416.99,307.75 Q418.29,308.85 419.8,307.95 Q421.31,308.85 422.61,307.75 Q424.01,308.75 425.2,307.65 C423.36,306.85 421.42,305.06 419.8,302.6 Z" fill="#34b482"/><path d="M418.18,303.6 C417.45,305.11 416.58,305.6 415.75,306.4 Q416.28,307.5 416.92,306.5 Q417.5,307.6 418.18,306.7 Q418.86,307.6 419.44,306.5 Q420.08,307.5 420.61,306.4 C419.78,305.6 418.91,305.11 418.18,303.6 Z" fill="#5fcf9f" opacity="0.55"/><path d="M419.8,300.4 C418.72,302.19 417.42,303.05 416.2,303.85 Q416.99,304.95 417.93,303.95 Q418.79,305.05 419.8,304.15 Q420.81,305.05 421.67,303.95 Q422.61,304.95 423.4,303.85 C422.18,303.05 420.88,302.19 419.8,300.4 Z" fill="#1f9068"/><path d="M419.8,299.85 C418.72,301.64 417.42,302.5 416.2,303.3 Q416.99,304.4 417.93,303.4 Q418.79,304.5 419.8,303.6 Q420.81,304.5 421.67,303.4 Q422.61,304.4 423.4,303.3 C422.18,302.5 420.88,301.64 419.8,299.85 Z" fill="#34b482"/><path d="M418.72,300.85 C418.23,301.69 417.65,301.25 417.1,302.05 Q417.46,303.15 417.88,302.15 Q418.27,303.25 418.72,302.35 Q419.17,303.25 419.56,302.15 Q419.98,303.15 420.34,302.05 C419.79,301.25 419.21,301.69 418.72,300.85 Z" fill="#5fcf9f" opacity="0.55"/><path d="M417.3,304.1 Q419.8,305.6 422.8,304.6 M415.3,308.6 Q419.3,310.6 424.3,309.1 M413.3,313.1 Q418.8,315.1 425.8,313.1 M412.3,316.6 Q415.8,318.1 418.8,317.1" fill="none" stroke="#d8fff0" stroke-width="0.8" opacity="0.8"/><circle cx="419.8" cy="299.5" r="0.8" fill="#e8fff4"/></g>
<g><ellipse cx="516" cy="339.6" rx="14" ry="2.2" fill="#2a8a68" opacity="0.28"/><rect x="514.3" y="327.8" width="3.4" height="10.4" fill="#b23640"/><path d="M516,316.9 C510.84,322.99 504.65,328.2 498.8,329.8 Q502.58,332 507.06,330 Q511.18,332.2 516,330.4 Q520.82,332.2 524.94,330 Q529.42,332 533.2,329.8 C527.35,328.2 521.16,322.99 516,316.9 Z" fill="#1f9068"/><path d="M516,315.8 C510.84,321.89 504.65,327.1 498.8,328.7 Q502.58,330.9 507.06,328.9 Q511.18,331.1 516,329.3 Q520.82,331.1 524.94,328.9 Q529.42,330.9 533.2,328.7 C527.35,327.1 521.16,321.89 516,315.8 Z" fill="#34b482"/><path d="M510.84,317.8 C508.52,322 505.73,324.6 503.1,326.2 Q504.8,328.4 506.82,326.4 Q508.67,328.6 510.84,326.8 Q513.01,328.6 514.86,326.4 Q516.88,328.4 518.58,326.2 C515.95,324.6 513.16,322 510.84,317.8 Z" fill="#5fcf9f" opacity="0.55"/><path d="M516,309.9 C511.74,315.23 506.63,319.4 501.8,321 Q504.92,323.2 508.62,321.2 Q512.02,323.4 516,321.6 Q519.98,323.4 523.38,321.2 Q527.08,323.2 530.2,321 C525.37,319.4 520.26,315.23 516,309.9 Z" fill="#1f9068"/><path d="M516,308.8 C511.74,314.13 506.63,318.3 501.8,319.9 Q504.92,322.1 508.62,320.1 Q512.02,322.3 516,320.5 Q519.98,322.3 523.38,320.1 Q527.08,322.1 530.2,319.9 C525.37,318.3 520.26,314.13 516,308.8 Z" fill="#34b482"/><path d="M511.74,310.8 C509.82,314.24 507.52,315.8 505.35,317.4 Q506.76,319.6 508.42,317.6 Q509.95,319.8 511.74,318 Q513.53,319.8 515.06,317.6 Q516.72,319.6 518.13,317.4 C515.96,315.8 513.66,314.24 511.74,310.8 Z" fill="#5fcf9f" opacity="0.55"/><path d="M516,302.9 C512.76,307.81 508.87,311.4 505.2,313 Q507.58,315.2 510.38,313.2 Q512.98,315.4 516,313.6 Q519.02,315.4 521.62,313.2 Q524.42,315.2 526.8,313 C523.13,311.4 519.24,307.81 516,302.9 Z" fill="#1f9068"/><path d="M516,301.8 C512.76,306.71 508.87,310.3 505.2,311.9 Q507.58,314.1 510.38,312.1 Q512.98,314.3 516,312.5 Q519.02,314.3 521.62,312.1 Q524.42,314.1 526.8,311.9 C523.13,310.3 519.24,306.71 516,301.8 Z" fill="#34b482"/><path d="M512.76,303.8 C511.3,306.82 509.55,307.8 507.9,309.4 Q508.97,311.6 510.23,309.6 Q511.4,311.8 512.76,310 Q514.12,311.8 515.29,309.6 Q516.55,311.6 517.62,309.4 C515.97,307.8 514.22,306.82 512.76,303.8 Z" fill="#5fcf9f" opacity="0.55"/><path d="M516,297.4 C513.84,300.97 511.25,302.7 508.8,304.3 Q510.38,306.5 512.26,304.5 Q513.98,306.7 516,304.9 Q518.02,306.7 519.74,304.5 Q521.62,306.5 523.2,304.3 C520.75,302.7 518.16,300.97 516,297.4 Z" fill="#1f9068"/><path d="M516,296.3 C513.84,299.87 511.25,301.6 508.8,303.2 Q510.38,305.4 512.26,303.4 Q513.98,305.6 516,303.8 Q518.02,305.6 519.74,303.4 Q521.62,305.4 523.2,303.2 C520.75,301.6 518.16,299.87 516,296.3 Z" fill="#34b482"/><path d="M513.84,298.3 C512.87,299.98 511.7,299.1 510.6,300.7 Q511.31,302.9 512.16,300.9 Q512.93,303.1 513.84,301.3 Q514.75,303.1 515.52,300.9 Q516.37,302.9 517.08,300.7 C515.98,299.1 514.81,299.98 513.84,298.3 Z" fill="#5fcf9f" opacity="0.55"/><path d="M513,299.8 Q516,303.8 521,303.8 M509,306.8 Q513,312.3 524,312.3 M506,314.8 Q512,320.8 527,319.8 M502,325.8 Q508,329.3 515,327.8 M518,324.8 Q521,321.8 525,321.3" fill="none" stroke="#e8fff4" stroke-width="0.9" stroke-dasharray="1.2 0.9" opacity="0.9"/><circle cx="516" cy="299.8" r="1.25" fill="#c8303a"/><circle cx="514.5" cy="310.8" r="1.25" fill="#c8303a"/><circle cx="511" cy="318.3" r="1.25" fill="#c8303a"/><circle cx="524" cy="326.8" r="1.25" fill="#c8303a"/><circle cx="509.5" cy="329.3" r="1.25" fill="#c8303a"/><circle cx="520" cy="327.8" r="1.1" fill="#f3e08a"/><circle cx="516" cy="295.1" r="1.35" fill="#fff0d0"/></g>
<g><ellipse cx="577.8" cy="322.2" rx="8" ry="1.4" fill="#2a8a68" opacity="0.3"/><path d="M574.8 300.8 L571.4 293.8 M572.8 296.8 L570.4 297.2 M572.2 295.4 L573.6 293.2 M580.8 300.8 L584.2 293.8 M582.8 296.8 L585.2 297.2 M583.4 295.4 L582 293.2" stroke="#5a5a34" stroke-width="1.2" fill="none"/><rect x="574.2" y="317.8" width="2.2" height="4" fill="#3c4a44"/><rect x="579.2" y="317.8" width="2.2" height="4" fill="#3c4a44"/><path d="M573.8 310.8 L571.2 315.3 M581.8 310.8 L584.4 315.3" stroke="#c47c38" stroke-width="1.8" fill="none"/><circle cx="571.2" cy="315.4" r="1.1" fill="#3c4a44"/><circle cx="584.4" cy="315.4" r="1.1" fill="#3c4a44"/><ellipse cx="577.8" cy="313.4" rx="5.2" ry="6.4" fill="#d08c46"/><ellipse cx="577.8" cy="314.2" rx="3.2" ry="4.6" fill="#eab070"/><ellipse cx="577.8" cy="304.2" rx="5" ry="5.2" fill="#c8823e"/><ellipse cx="572.8" cy="301.2" rx="1.6" ry="1" fill="#c8823e"/><ellipse cx="582.8" cy="301.2" rx="1.6" ry="1" fill="#c8823e"/><circle cx="577.8" cy="306.4" r="2.2" fill="#ec2224"/></g>
<g><ellipse cx="572.7" cy="383.8" rx="14" ry="2.2" fill="#2a8a68" opacity="0.28"/><rect x="571" y="372" width="3.4" height="10.4" fill="#b23640"/><path d="M572.7,361.1 C567.54,367.19 561.35,372.4 555.5,374 Q559.28,376.2 563.76,374.2 Q567.88,376.4 572.7,374.6 Q577.52,376.4 581.64,374.2 Q586.12,376.2 589.9,374 C584.05,372.4 577.86,367.19 572.7,361.1 Z" fill="#1f9068"/><path d="M572.7,360 C567.54,366.09 561.35,371.3 555.5,372.9 Q559.28,375.1 563.76,373.1 Q567.88,375.3 572.7,373.5 Q577.52,375.3 581.64,373.1 Q586.12,375.1 589.9,372.9 C584.05,371.3 577.86,366.09 572.7,360 Z" fill="#34b482"/><path d="M567.54,362 C565.22,366.2 562.43,368.8 559.8,370.4 Q561.5,372.6 563.52,370.6 Q565.37,372.8 567.54,371 Q569.71,372.8 571.56,370.6 Q573.58,372.6 575.28,370.4 C572.65,368.8 569.86,366.2 567.54,362 Z" fill="#5fcf9f" opacity="0.55"/><path d="M572.7,354.1 C568.44,359.43 563.33,363.6 558.5,365.2 Q561.62,367.4 565.32,365.4 Q568.72,367.6 572.7,365.8 Q576.68,367.6 580.08,365.4 Q583.78,367.4 586.9,365.2 C582.07,363.6 576.96,359.43 572.7,354.1 Z" fill="#1f9068"/><path d="M572.7,353 C568.44,358.33 563.33,362.5 558.5,364.1 Q561.62,366.3 565.32,364.3 Q568.72,366.5 572.7,364.7 Q576.68,366.5 580.08,364.3 Q583.78,366.3 586.9,364.1 C582.07,362.5 576.96,358.33 572.7,353 Z" fill="#34b482"/><path d="M568.44,355 C566.52,358.44 564.22,360 562.05,361.6 Q563.46,363.8 565.12,361.8 Q566.65,364 568.44,362.2 Q570.23,364 571.76,361.8 Q573.42,363.8 574.83,361.6 C572.66,360 570.36,358.44 568.44,355 Z" fill="#5fcf9f" opacity="0.55"/><path d="M572.7,347.1 C569.46,352.01 565.57,355.6 561.9,357.2 Q564.28,359.4 567.08,357.4 Q569.68,359.6 572.7,357.8 Q575.72,359.6 578.32,357.4 Q581.12,359.4 583.5,357.2 C579.83,355.6 575.94,352.01 572.7,347.1 Z" fill="#1f9068"/><path d="M572.7,346 C569.46,350.91 565.57,354.5 561.9,356.1 Q564.28,358.3 567.08,356.3 Q569.68,358.5 572.7,356.7 Q575.72,358.5 578.32,356.3 Q581.12,358.3 583.5,356.1 C579.83,354.5 575.94,350.91 572.7,346 Z" fill="#34b482"/><path d="M569.46,348 C568,351.02 566.25,352 564.6,353.6 Q565.67,355.8 566.93,353.8 Q568.1,356 569.46,354.2 Q570.82,356 571.99,353.8 Q573.25,355.8 574.32,353.6 C572.67,352 570.92,351.02 569.46,348 Z" fill="#5fcf9f" opacity="0.55"/><path d="M572.7,341.6 C570.54,345.17 567.95,346.9 565.5,348.5 Q567.08,350.7 568.96,348.7 Q570.68,350.9 572.7,349.1 Q574.72,350.9 576.44,348.7 Q578.32,350.7 579.9,348.5 C577.45,346.9 574.86,345.17 572.7,341.6 Z" fill="#1f9068"/><path d="M572.7,340.5 C570.54,344.07 567.95,345.8 565.5,347.4 Q567.08,349.6 568.96,347.6 Q570.68,349.8 572.7,348 Q574.72,349.8 576.44,347.6 Q578.32,349.6 579.9,347.4 C577.45,345.8 574.86,344.07 572.7,340.5 Z" fill="#34b482"/><path d="M570.54,342.5 C569.57,344.18 568.4,343.3 567.3,344.9 Q568.01,347.1 568.86,345.1 Q569.63,347.3 570.54,345.5 Q571.45,347.3 572.22,345.1 Q573.07,347.1 573.78,344.9 C572.68,343.3 571.51,344.18 570.54,342.5 Z" fill="#5fcf9f" opacity="0.55"/><path d="M569.7,344 Q572.7,348 577.7,348 M565.7,351 Q569.7,356.5 580.7,356.5 M562.7,359 Q568.7,365 583.7,364 M558.7,370 Q564.7,373.5 571.7,372 M574.7,369 Q577.7,366 581.7,365.5" fill="none" stroke="#e8fff4" stroke-width="0.9" stroke-dasharray="1.2 0.9" opacity="0.9"/><circle cx="572.7" cy="344" r="1.25" fill="#c8303a"/><circle cx="571.2" cy="355" r="1.25" fill="#c8303a"/><circle cx="567.7" cy="362.5" r="1.25" fill="#c8303a"/><circle cx="580.7" cy="371" r="1.25" fill="#c8303a"/><circle cx="566.2" cy="373.5" r="1.25" fill="#c8303a"/><circle cx="576.7" cy="372" r="1.1" fill="#f3e08a"/><circle cx="572.7" cy="339.3" r="1.35" fill="#fff0d0"/></g>
<g><ellipse cx="413.2" cy="417.8" rx="14" ry="2.2" fill="#2a8a68" opacity="0.28"/><rect x="411.5" y="406" width="3.4" height="10.4" fill="#b23640"/><path d="M413.2,395.1 C408.04,401.19 401.85,406.4 396,408 Q399.78,410.2 404.26,408.2 Q408.38,410.4 413.2,408.6 Q418.02,410.4 422.14,408.2 Q426.62,410.2 430.4,408 C424.55,406.4 418.36,401.19 413.2,395.1 Z" fill="#1f9068"/><path d="M413.2,394 C408.04,400.09 401.85,405.3 396,406.9 Q399.78,409.1 404.26,407.1 Q408.38,409.3 413.2,407.5 Q418.02,409.3 422.14,407.1 Q426.62,409.1 430.4,406.9 C424.55,405.3 418.36,400.09 413.2,394 Z" fill="#34b482"/><path d="M408.04,396 C405.72,400.2 402.93,402.8 400.3,404.4 Q402,406.6 404.02,404.6 Q405.87,406.8 408.04,405 Q410.21,406.8 412.06,404.6 Q414.08,406.6 415.78,404.4 C413.15,402.8 410.36,400.2 408.04,396 Z" fill="#5fcf9f" opacity="0.55"/><path d="M413.2,388.1 C408.94,393.43 403.83,397.6 399,399.2 Q402.12,401.4 405.82,399.4 Q409.22,401.6 413.2,399.8 Q417.18,401.6 420.58,399.4 Q424.28,401.4 427.4,399.2 C422.57,397.6 417.46,393.43 413.2,388.1 Z" fill="#1f9068"/><path d="M413.2,387 C408.94,392.33 403.83,396.5 399,398.1 Q402.12,400.3 405.82,398.3 Q409.22,400.5 413.2,398.7 Q417.18,400.5 420.58,398.3 Q424.28,400.3 427.4,398.1 C422.57,396.5 417.46,392.33 413.2,387 Z" fill="#34b482"/><path d="M408.94,389 C407.02,392.44 404.72,394 402.55,395.6 Q403.96,397.8 405.62,395.8 Q407.15,398 408.94,396.2 Q410.73,398 412.26,395.8 Q413.92,397.8 415.33,395.6 C413.16,394 410.86,392.44 408.94,389 Z" fill="#5fcf9f" opacity="0.55"/><path d="M413.2,381.1 C409.96,386.01 406.07,389.6 402.4,391.2 Q404.78,393.4 407.58,391.4 Q410.18,393.6 413.2,391.8 Q416.22,393.6 418.82,391.4 Q421.62,393.4 424,391.2 C420.33,389.6 416.44,386.01 413.2,381.1 Z" fill="#1f9068"/><path d="M413.2,380 C409.96,384.91 406.07,388.5 402.4,390.1 Q404.78,392.3 407.58,390.3 Q410.18,392.5 413.2,390.7 Q416.22,392.5 418.82,390.3 Q421.62,392.3 424,390.1 C420.33,388.5 416.44,384.91 413.2,380 Z" fill="#34b482"/><path d="M409.96,382 C408.5,385.02 406.75,386 405.1,387.6 Q406.17,389.8 407.43,387.8 Q408.6,390 409.96,388.2 Q411.32,390 412.49,387.8 Q413.75,389.8 414.82,387.6 C413.17,386 411.42,385.02 409.96,382 Z" fill="#5fcf9f" opacity="0.55"/><path d="M413.2,375.6 C411.04,379.17 408.45,380.9 406,382.5 Q407.58,384.7 409.46,382.7 Q411.18,384.9 413.2,383.1 Q415.22,384.9 416.94,382.7 Q418.82,384.7 420.4,382.5 C417.95,380.9 415.36,379.17 413.2,375.6 Z" fill="#1f9068"/><path d="M413.2,374.5 C411.04,378.07 408.45,379.8 406,381.4 Q407.58,383.6 409.46,381.6 Q411.18,383.8 413.2,382 Q415.22,383.8 416.94,381.6 Q418.82,383.6 420.4,381.4 C417.95,379.8 415.36,378.07 413.2,374.5 Z" fill="#34b482"/><path d="M411.04,376.5 C410.07,378.18 408.9,377.3 407.8,378.9 Q408.51,381.1 409.36,379.1 Q410.13,381.3 411.04,379.5 Q411.95,381.3 412.72,379.1 Q413.57,381.1 414.28,378.9 C413.18,377.3 412.01,378.18 411.04,376.5 Z" fill="#5fcf9f" opacity="0.55"/><path d="M410.2,378 Q413.2,382 418.2,382 M406.2,385 Q410.2,390.5 421.2,390.5 M403.2,393 Q409.2,399 424.2,398 M399.2,404 Q405.2,407.5 412.2,406 M415.2,403 Q418.2,400 422.2,399.5" fill="none" stroke="#e8fff4" stroke-width="0.9" stroke-dasharray="1.2 0.9" opacity="0.9"/><circle cx="413.2" cy="378" r="1.25" fill="#c8303a"/><circle cx="411.7" cy="389" r="1.25" fill="#c8303a"/><circle cx="408.2" cy="396.5" r="1.25" fill="#c8303a"/><circle cx="421.2" cy="405" r="1.25" fill="#c8303a"/><circle cx="406.7" cy="407.5" r="1.25" fill="#c8303a"/><circle cx="417.2" cy="406" r="1.1" fill="#f3e08a"/><circle cx="413.2" cy="373.3" r="1.35" fill="#fff0d0"/></g>
<g><ellipse cx="471.65" cy="428.2" rx="17.5" ry="2.3" fill="#2a8a68" opacity="0.3"/><rect x="457.1" y="396.6" width="1.8" height="22" fill="#2e4643"/><path d="M456.6 416.6 H459.4 L460.3 424.6 V427.6 H455.7 V424.6 Z" fill="#2e4643"/><rect x="455.8" y="392.2" width="4.4" height="5.6" rx="1.6" fill="#f6dc10"/><rect x="457.4" y="393.2" width="1.2" height="3.4" fill="#d8a800"/><path d="M455.8 392.6 L458 390.6 L460.2 392.6 Z" fill="#2e4643"/><rect x="463.3" y="418.2" width="20.2" height="7.2" rx="0.8" fill="#f7922c"/><rect x="463.3" y="418.2" width="20.2" height="2.2" rx="0.8" fill="#fba040"/><rect x="462.1" y="425.2" width="23.4" height="1.5" fill="#b86a22"/><rect x="463.5" y="426.4" width="1.3" height="2.4" fill="#3a3a2e"/><rect x="482.9" y="426.4" width="1.6" height="2.4" fill="#3a3a2e"/><rect x="464.3" y="419.4" width="0.9" height="4.2" fill="#c86a1c"/></g>
<g><rect x="510.8" y="419.8" width="9.4" height="8.8" fill="#fbbd6c"/><rect x="510.8" y="419.8" width="3.6" height="8.8" fill="#fdd08c" opacity="0.7"/><rect x="514.7" y="418.8" width="1.600" height="9.800" fill="#e25040"/><rect x="512.4" y="418.2" width="6.200" height="1.500" fill="#e25040"/></g>
<g><rect x="436.4" y="469.18" width="1.6" height="4.89" fill="#b23640"/><path d="M437.2,464.06 C434.77,466.92 431.86,469.37 429.12,470.12 Q430.89,471.15 433,470.21 Q434.94,471.25 437.2,470.4 Q439.46,471.25 441.4,470.21 Q443.51,471.15 445.28,470.12 C442.54,469.37 439.63,466.92 437.2,464.06 Z" fill="#1f9068"/><path d="M437.2,463.54 C434.77,466.4 431.86,468.85 429.12,469.6 Q430.89,470.64 433,469.7 Q434.94,470.73 437.2,469.88 Q439.46,470.73 441.4,469.7 Q443.51,470.64 445.28,469.6 C442.54,468.85 439.63,466.4 437.2,463.54 Z" fill="#34b482"/><path d="M434.77,464.48 C433.68,466.45 432.37,467.68 431.14,468.43 Q431.94,469.46 432.88,468.52 Q433.76,469.56 434.77,468.71 Q435.79,469.56 436.67,468.52 Q437.61,469.46 438.41,468.43 C437.18,467.68 435.87,466.45 434.77,464.48 Z" fill="#5fcf9f" opacity="0.55"/><path d="M437.2,460.77 C435.2,463.27 432.8,465.23 430.53,465.98 Q431.99,467.02 433.73,466.08 Q435.33,467.11 437.2,466.27 Q439.07,467.11 440.67,466.08 Q442.41,467.02 443.87,465.98 C441.6,465.23 439.2,463.27 437.2,460.77 Z" fill="#1f9068"/><path d="M437.2,460.25 C435.2,462.76 432.8,464.71 430.53,465.47 Q431.99,466.5 433.73,465.56 Q435.33,466.59 437.2,465.75 Q439.07,466.59 440.67,465.56 Q442.41,466.5 443.87,465.47 C441.6,464.71 439.2,462.76 437.2,460.25 Z" fill="#34b482"/><path d="M435.2,461.19 C434.3,462.81 433.22,463.54 432.19,464.29 Q432.86,465.33 433.64,464.39 Q434.36,465.42 435.2,464.57 Q436.04,465.42 436.76,464.39 Q437.54,465.33 438.2,464.29 C437.18,463.54 436.1,462.81 435.2,461.19 Z" fill="#5fcf9f" opacity="0.55"/><path d="M437.2,457.48 C435.68,459.79 433.85,461.47 432.12,462.22 Q433.24,463.26 434.56,462.32 Q435.78,463.35 437.2,462.51 Q438.62,463.35 439.84,462.32 Q441.16,463.26 442.28,462.22 C440.55,461.47 438.72,459.79 437.2,457.48 Z" fill="#1f9068"/><path d="M437.2,456.96 C435.68,459.27 433.85,460.95 432.12,461.71 Q433.24,462.74 434.56,461.8 Q435.78,462.83 437.2,461.99 Q438.62,462.83 439.84,461.8 Q441.16,462.74 442.28,461.71 C440.55,460.95 438.72,459.27 437.2,456.96 Z" fill="#34b482"/><path d="M435.68,457.9 C434.99,459.32 434.17,459.78 433.39,460.53 Q433.9,461.57 434.49,460.63 Q435.04,461.66 435.68,460.81 Q436.32,461.66 436.86,460.63 Q437.46,461.57 437.96,460.53 C437.18,459.78 436.36,459.32 435.68,457.9 Z" fill="#5fcf9f" opacity="0.55"/><path d="M437.2,454.89 C436.18,456.57 434.97,457.38 433.82,458.13 Q434.56,459.17 435.44,458.23 Q436.25,459.26 437.2,458.42 Q438.15,459.26 438.96,458.23 Q439.84,459.17 440.58,458.13 C439.43,457.38 438.22,456.57 437.2,454.89 Z" fill="#1f9068"/><path d="M437.2,454.38 C436.18,456.05 434.97,456.87 433.82,457.62 Q434.56,458.65 435.44,457.71 Q436.25,458.75 437.2,457.9 Q438.15,458.75 438.96,457.71 Q439.84,458.65 440.58,457.62 C439.43,456.87 438.22,456.05 437.2,454.38 Z" fill="#34b482"/><path d="M436.18,455.31 C435.73,456.1 435.18,455.69 434.66,456.44 Q435,457.48 435.39,456.54 Q435.76,457.57 436.18,456.72 Q436.61,457.57 436.98,456.54 Q437.37,457.48 437.71,456.44 C437.19,455.69 436.64,456.1 436.18,455.31 Z" fill="#5fcf9f" opacity="0.55"/><path d="M434.85,458.37 Q437.2,459.78 440.02,458.84 M432.97,462.6 Q436.73,464.48 441.43,463.07 M431.09,466.83 Q436.26,468.71 442.84,466.83 M430.15,470.12 Q433.44,471.53 436.26,470.59" fill="none" stroke="#d8fff0" stroke-width="0.75" opacity="0.8"/><circle cx="437.2" cy="454.05" r="0.75" fill="#e8fff4"/></g>
<g><ellipse cx="559.4" cy="484.1" rx="14" ry="2.4" fill="#2a8a68" opacity="0.3"/><rect x="557.3" y="467.4" width="2.6" height="16.5" fill="#fff"/><path d="M557.3 470 L559.9 468.4 V469.8 L557.3 471.4 Z" fill="#d8323c"/><path d="M557.3 473.2 L559.9 471.6 V473 L557.3 474.6 Z" fill="#d8323c"/><path d="M557.3 476.4 L559.9 474.8 V476.2 L557.3 477.8 Z" fill="#d8323c"/><path d="M557.3 479.6 L559.9 478 V479.4 L557.3 481 Z" fill="#d8323c"/><path d="M557.3 482.8 L559.9 481.2 V482.6 L557.3 484.2 Z" fill="#d8323c"/><path d="M555 456.4 V451.6 H558 V453 H556.2 V456.4 Z" fill="#4a2a22"/><rect x="548.6" y="455.4" width="19" height="12.6" rx="2.2" fill="#f01414"/><rect x="548.6" y="465" width="19" height="3" rx="1.5" fill="#d00c10"/><path d="M550.6 455.6 Q558.1 453.8 565.6 455.6 L565.6 457 L563.9 458 L562.2 456.8 L560.4 458.4 L558.6 456.9 L556.8 458.4 L555 456.8 L553 458 L550.6 456.8 Z" fill="#fff"/></g></svg>
<div class="tb" style="left:432px;background:#f7a41d"><svg width="15" height="15" viewBox="0 0 15 15" fill="none" stroke="#7a4c08" stroke-width="1.250"><path d="M5.800 4.400 Q7.500 5.600 9.200 4.400 M10.600 5.800 Q9.400 7.500 10.600 9.200 M9.200 10.600 Q7.500 9.400 5.800 10.600 M4.400 9.200 Q5.600 7.500 4.400 5.800"/><circle cx="4.400" cy="4.400" r="1.700"/><circle cx="10.600" cy="4.400" r="1.700"/><circle cx="4.400" cy="10.600" r="1.700"/><circle cx="10.600" cy="10.600" r="1.700"/></svg></div>
<div class="tb" style="left:450.600px;background:#f7a41d"><svg width="15" height="15" viewBox="0 0 15 15"><path d="M5.300 7.500 V5.800 Q5.300 3.800 7.500 3.800 Q9.700 3.800 9.700 5.800 V6.600" fill="none" stroke="#2a1c04" stroke-width="1.300"/><rect x="3.800" y="7" width="7.800" height="5.200" rx="0.500" fill="#2a1c04"/><rect x="6.900" y="8.600" width="1.500" height="1.800" fill="#f7c46d"/></svg></div>
<div class="tb" style="left:469.500px"><svg width="15" height="15" viewBox="0 0 15 15"><path d="M4.400 11 V7.200 Q4.400 4.200 7.500 4.200 Q10.600 4.200 10.600 7.200 V11" fill="none" stroke="#b9c9bb" stroke-width="2.100"/><path d="M3.300 11.400 H5.500 M9.500 11.400 H11.700" stroke="#f2f2f2" stroke-width="1.300"/></svg></div>
<div class="tb" style="left:488.300px"><svg width="15" height="15" viewBox="0 0 15 15" fill="none" stroke="#c4c4c4" stroke-width="1.800"><rect x="3" y="4.600" width="9.200" height="5.800" rx="2.900"/><path d="M6 7.500 H9.200" stroke-width="1.400"/></svg></div>
<div class="tb" style="left:507px"><svg width="15" height="15" viewBox="0 0 15 15"><path d="M4.600 6 H10.400 V10 Q10.400 12.400 7.500 12.400 Q4.600 12.400 4.600 10 Z" fill="#c8c8c8"/><path d="M5.400 5.200 Q5.400 3 7.500 3 Q9.600 3 9.600 5.200 Z" fill="#c8c8c8"/><path d="M7.500 6 V12.500" stroke="#3a3a3a" stroke-width="0.900"/><path d="M4.600 7 L2.600 5.600 M4.600 8.800 H2.300 M4.800 10.600 L2.800 12.200 M10.400 7 L12.400 5.600 M10.400 8.800 H12.700 M10.200 10.600 L12.200 12.200 M5.600 3.600 L4.400 2.400 M9.400 3.600 L10.600 2.400" stroke="#c8c8c8" stroke-width="1"/></svg></div>
</div>
<div id="right">
<span class="pl" style="top:14px">Name</span><div class="pf" style="top:11px">2</div>
<span class="pl" style="top:36px">Start Distance</span><div class="pf" style="top:33px">1</div>
<span class="pl" style="top:59px">End Distance</span><div class="pf" style="top:56px">-1</div>
<span class="pl" style="top:81px">Scene Distance</span><div class="pf" style="top:78px">1809.932</div>
<span class="pl" style="top:104px">Play Cooldown</span><div class="pf" style="top:101px">0</div>
<span style="position:absolute;left:6px;top:425.500px;font-size:15.100px;color:#8c8c8c;letter-spacing:-0.100px">Activate Windows</span>
<span style="position:absolute;left:6px;top:444.500px;font-size:11.250px;color:#8c8c8c">Go to Settings to activate Windows.</span>
</div>
<div id="bottom">
<div style="position:absolute;left:0;top:0;width:580.300px;height:47px;overflow:hidden">
<div class="tab" style="left:6px;width:52px;">Start</div>
<div class="tab n" style="left:65.7px">1</div>
<div class="tab n" style="left:144.4px;background:linear-gradient(#ffb02e,#f39c12);color:#2a2005" id="sel">2</div>
<div class="tab n" style="left:223.1px">3</div>
<div class="tab n" style="left:301.8px">4</div>
<div class="tab n" style="left:380.5px">5</div>
<div class="tab n" style="left:459.2px">6</div>
<div class="tab n" style="left:537.9px">7</div>
</div>
<div style="position:absolute;left:581px;top:0;width:6px;height:47px;background:#282828"></div>
<div style="position:absolute;left:6px;top:33px;width:574.200px;height:5px;background:#1c1c1c;border-radius:2px"></div>
<div style="position:absolute;left:6px;top:33px;width:479px;height:5px;background:#3a3a3a;border-radius:2px"></div>
</div>
<div id="bottom2">
<div class="btn" style="left:7px;top:11px;width:46px;height:22px"><svg style="position:absolute;left:8px;top:7px" width="8" height="8" viewBox="0 0 8 8"><path d="M4 0.300 V7.700 M0.300 4 H7.700" stroke="#d0d0d0" stroke-width="1.300"/></svg><span style="position:absolute;left:19.400px;top:6.600px;font-size:9px;color:#ccc">Add</span></div>
<div class="btn" style="left:61px;top:11px;width:22px;height:22px"><svg style="position:absolute;left:7px;top:8px" width="8" height="6" viewBox="0 0 8 6"><path d="M1 4.800 L4 1.800 L7 4.800" fill="none" stroke="#ccc" stroke-width="1.500"/></svg></div>
</div>
<div style="left:117px;top:61px;width:2px;height:485px;background:#0c0c0c"></div>
<div style="left:705.300px;top:499px;width:1.500px;height:47px;background:#0a0a0a"></div>
<div style="left:0;top:60px;width:1024px;height:2px;background:#0c0c0c"></div>
<div style="left:0;top:60px;width:117px;height:1px;background:#0c0c0c"></div>
</body></html>
